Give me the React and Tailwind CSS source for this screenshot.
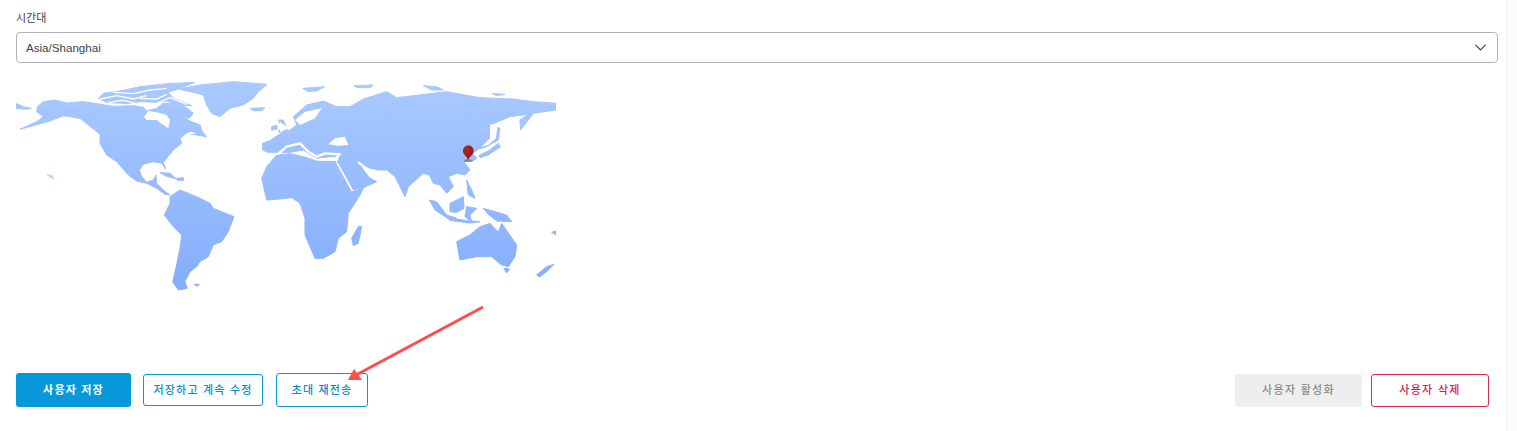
import React from 'react';
import { ChevronDown } from 'lucide-react';

const FONT = 'font-["Liberation_Sans","Noto_Sans_CJK_KR",sans-serif]';

// coordinates are the 3x crop coordinates, so the groups scale them back
const WorldMap = () => (
    <svg width="540" height="215" viewBox="16 80 540 215" className="block">
        <defs>
            <linearGradient id="land" gradientUnits="userSpaceOnUse" x1="0" y1="20" x2="0" y2="650">
                <stop offset="0" stopColor="#a9c9ff" />
                <stop offset="1" stopColor="#84adfb" />
            </linearGradient>
            <radialGradient id="pin" cx="0.4" cy="0.3" r="0.8">
                <stop offset="0" stopColor="#b32a2a" />
                <stop offset="1" stopColor="#7d1212" />
            </radialGradient>
            <filter id="soft" x="-5%" y="-5%" width="110%" height="110%">
                <feGaussianBlur stdDeviation="1.8" />
            </filter>
        </defs>
        <g transform="translate(0,75) scale(0.3333)" filter="url(#soft)">
            <g fill="url(#land)" stroke="url(#land)" strokeWidth="3" strokeLinejoin="round">
                {/* north america */}
                <path d="M112,95 L130,80 L165,75 L200,84 L250,80 L290,86 L340,94 L400,92 L430,97 L440,108 L470,100 L490,85 L525,85 L560,98 L580,115 L570,128 L555,130 L575,140 L600,150 L607,170 L620,185 L590,180 L560,175 L540,190 L545,205 L520,225 L508,240 L490,262 L497,282 L485,265 L460,260 L430,268 L418,285 L425,305 L440,322 L460,315 L468,300 L470,325 L490,345 L510,360 L495,358 L470,340 L440,325 L410,318 L385,300 L350,260 L320,240 L300,205 L300,178 L265,150 L240,130 L190,122 L150,138 L60,163 L110,140 L130,125 L110,110 Z" />
                <path d="M48,85 L70,95 L95,100 L80,103 L48,100 Z" />
                {/* arctic islands */}
                <path d="M295,70 L310,55 L360,48 L420,35 L500,26 L585,22 L535,42 L505,52 L520,70 L575,92 L540,92 L500,78 L470,82 L420,80 L380,86 L320,82 Z" />
                {/* greenland, iceland */}
                <path d="M535,42 L600,30 L700,20 L802,28 L775,50 L760,70 L730,90 L690,100 L660,125 L635,115 L620,90 L610,60 L570,50 Z" />
                <path d="M750,100 L795,98 L785,107 L760,107 Z" />
                {/* british isles */}
                <path d="M835,135 L850,135 L862,165 L850,178 L835,170 L845,155 Z" />
                <path d="M815,155 L830,150 L832,162 L815,165 Z" />
                {/* caribbean */}
                <path d="M480,293 L510,295 L530,312 L500,304 Z" />
                <path d="M530,310 L550,308 L552,316 L532,316 Z" />
                <path d="M140,298 L158,302 L160,312 L150,306 Z" opacity="0.6" />
                {/* south america */}
                <path d="M510,365 L540,345 L590,365 L630,385 L640,400 L702,425 L685,470 L665,500 L640,510 L625,545 L600,560 L590,575 L570,590 L555,620 L562,640 L535,645 L518,620 L530,570 L540,520 L545,480 L520,455 L493,420 L510,385 Z" />
                <path d="M582,628 L598,628 L592,634 Z" />
            </g>
            {/* hudson bay, lakes and arctic channels */}
            <g fill="#ffffff">
                <path d="M432,125 L445,108 L470,112 L500,120 L510,135 L505,160 L490,150 L470,135 L440,135 Z" />
                <path d="M545,185 L570,170 L590,175 L560,180 Z" />
                <path d="M340,255 L360,285 L378,305 L350,275 Z" />
            </g>
            <g fill="none" stroke="#ffffff" strokeWidth="4">
                <path d="M300,72 L350,62 L400,72 L440,62" />
                <path d="M325,82 L370,76 L420,88" />
                <path d="M340,52 L400,56 L450,45 L500,40" />
                <path d="M420,70 L470,72 L500,58" />
                <path d="M470,85 L510,68 L560,88" />
            </g>
        </g>
        <g transform="translate(280,75) scale(0.3333)" filter="url(#soft)">
            <g fill="url(#land)" stroke="url(#land)" strokeWidth="3" strokeLinejoin="round">
                {/* eurasia */}
                <path d="M-52,205 L-30,197 L-5,180 L30,165 L50,150 L40,125 L80,90 L130,78 L170,95 L210,95 L250,72 L320,50 L350,68 L400,62 L500,50 L600,68 L700,72 L760,80 L828,85 L828,105 L760,115 L722,165 L720,135 L745,118 L690,125 L630,150 L660,160 L655,195 L620,215 L597,222 L578,235 L590,250 L578,258 L570,250 L552,260 L570,285 L555,300 L530,295 L505,305 L520,335 L500,355 L480,330 L460,325 L448,300 L430,295 L385,335 L375,365 L345,305 L320,285 L280,285 L240,265 L250,285 L270,310 L290,320 L250,338 L215,345 L170,265 L180,245 L150,245 L110,250 L70,225 L30,232 L0,232 L-38,232 L-52,225 Z" />
                {/* africa */}
                <path d="M-55,310 L-40,275 L-10,240 L30,236 L70,245 L110,258 L165,258 L215,350 L250,340 L240,360 L205,415 L200,470 L175,490 L165,530 L130,550 L105,550 L75,480 L75,430 L60,385 L35,368 L0,372 L-40,375 Z" />
                <path d="M235,455 L245,455 L235,505 L220,512 L215,490 Z" />
                {/* russian arctic */}
                <path d="M68,40 L135,35 L110,48 L85,50 Z" />
                <path d="M222,32 L280,30 L270,38 L230,38 Z" />
                <path d="M430,32 L470,35 L490,45 L455,45 Z" />
                <path d="M635,55 L675,58 L650,62 Z" />
                {/* south east asia */}
                <path d="M448,375 L470,380 L500,420 L530,430 L500,428 L465,405 Z" />
                <path d="M510,385 L550,365 L552,400 L530,412 L510,410 Z" />
                <path d="M560,395 L590,400 L570,420 L575,440 L555,425 Z" />
                <path d="M560,315 L575,345 L585,370 L565,360 Z" />
                <path d="M610,400 L680,420 L695,440 L650,438 L625,418 Z" />
                <path d="M500,428 L570,438 L600,440 L570,444 L510,436 Z" />
                {/* japan */}
                <path d="M655,205 L662,215 L625,240 L600,248 L598,240 L625,228 Z" />
                {/* australia, new zealand */}
                <path d="M530,500 L570,480 L600,455 L630,445 L655,472 L665,445 L710,510 L705,545 L685,575 L665,570 L635,545 L590,545 L540,555 Z" />
                <path d="M672,580 L688,582 L680,594 Z" />
                <path d="M770,600 L800,575 L822,568 L800,590 L778,606 Z" />
                <path d="M815,472 L828,468 L828,480 Z" />
            </g>
            <g fill="#ffffff">
                {/* seas */}
                <path d="M145,208 L165,190 L195,185 L205,210 L170,212 Z" />
                <path d="M0,140 L25,160 L0,172 Z" />
                <path d="M45,135 L75,110 L125,100 L105,130 L60,150 Z" />
                <path d="M630,148 L652,155 L648,190 L625,210 L605,215 L630,190 Z" />
            </g>
            <g fill="none" stroke="#ffffff" strokeLinecap="round">
                <path d="M-5,236 L20,215 L60,205 L85,230 L110,245 L135,235 L178,238 L165,254 L120,254" strokeWidth="7" />
                <path d="M172,265 L216,345" strokeWidth="5" />
                <path d="M236,263 L262,283 L290,288" strokeWidth="6" />
            </g>
        </g>
        <g transform="translate(280,75) scale(0.3333)">
            {/* pin */}
            <ellipse cx="565" cy="257" rx="13" ry="4" fill="#555f70" opacity="0.7" />
            <path d="M565,256 C561,242 549,240 549,227 A16,16 0 0 1 581,227 C581,240 569,242 565,256 Z" fill="url(#pin)" />
        </g>
    </svg>
);

const App = () => {
    return (
        <div className={`relative h-[431px] w-[1517px] overflow-hidden bg-[#fcfcfc] ${FONT}`}>
            <div className="flex h-full w-[1507px] flex-col border-r border-[#f4f4f4] bg-white pl-4 pr-[8px]">
                <label className="mt-[11px] h-[14px] text-[11px] leading-[14px] text-[#3f3f4a]">시간대</label>
                <div className="mt-[7px] flex h-[31px] items-center justify-between rounded border border-[#b1b1bd] pl-[9px] pr-[7px] text-[11.6px] text-[#3f3f4a]">
                    <span>Asia/Shanghai</span>
                    <ChevronDown size={19} strokeWidth={1.4} className="text-[#34344e]" />
                </div>
                <div className="mt-[17px]">
                    <WorldMap />
                </div>
                <div className="mt-[78px] flex items-center justify-between pr-[9px]">
                    <div className="flex items-center">
                        <button className="h-[34px] w-[115px] rounded-[3px] bg-[#0798d9] text-[11px] font-bold tracking-[1.2px] text-white">사용자 저장</button>
                        <button className="ml-3 h-[32px] w-[120px] rounded-[3px] border border-[#0798d9] text-[11px] font-medium tracking-[1.2px] text-[#0b8fcc]">저장하고 계속 수정</button>
                        <button className="ml-[13px] h-[34px] w-[92px] rounded-[3px] border border-[#0798d9] text-[11px] font-medium tracking-[1.2px] text-[#0c8ac4]">초대 재전송</button>
                    </div>
                    <div className="flex items-center">
                        <button className="h-[33px] w-[127px] rounded-[3px] bg-[#eeeeee] text-[11px] font-medium tracking-[1.3px] text-[#8a8a8a]">사용자 활성화</button>
                        <button className="ml-[9px] h-[33px] w-[118px] rounded-[3px] border border-[#d42f4a] text-[11px] font-medium tracking-[1.3px] text-[#d9204a]">사용자 삭제</button>
                    </div>
                </div>
            </div>
            {/* annotation arrow */}
            <svg className="pointer-events-none absolute left-0 top-0" width="1517" height="431">
                <line x1="483" y1="307" x2="356" y2="375" stroke="#ff4d4d" strokeWidth="3" />
                <polygon points="348,380 354,369 362,380" fill="#ff4d4d" />
            </svg>
        </div>
    );
};

export default App;
